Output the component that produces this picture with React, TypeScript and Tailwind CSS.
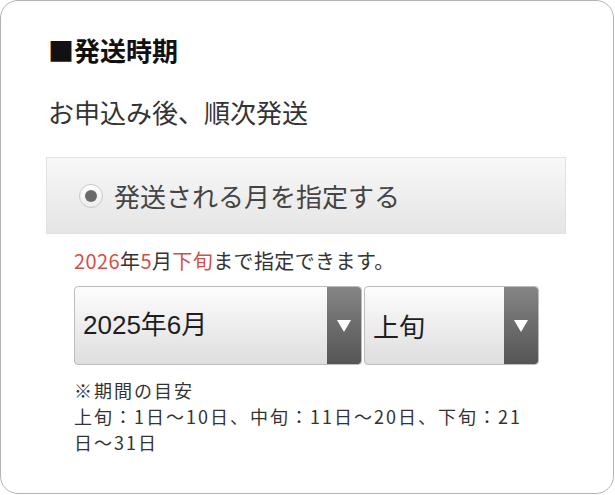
const jp = "font-['Noto_Sans_CJK_JP',sans-serif]";

function Arrow() {
  return (
    <div className="flex w-[34px] shrink-0 items-center justify-center rounded-r-[3px] bg-gradient-to-b from-[#858585] to-[#555555]">
      <svg width="14" height="12" viewBox="0 0 14 12">
        <path d="M0 0 H14 L7 12 Z" fill="#ffffff" />
      </svg>
    </div>
  );
}

function Select({ value, width, font }: { value: string; width: string; font: string }) {
  return (
    <div className={`flex h-[79px] ${width} overflow-hidden rounded-[4px] border border-[#bcbcbc] bg-gradient-to-b from-[#fdfdfd] to-[#dedede]`}>
      <div className={`flex flex-1 items-center pl-[8px] text-[26px] text-[#1e1e1e] ${font}`}>{value}</div>
      <Arrow />
    </div>
  );
}

export default function App() {
  return (
    <div className={`h-[495px] w-[615px] overflow-hidden bg-white ${jp}`}>
      <div className="h-[494px] w-[614px] rounded-[18px] border border-[#b3b3b3] pl-[47px] pr-[40px] pt-[32px]">
        <h2 className="text-[26px] font-bold leading-[34px] text-[#111]">■発送時期</h2>
        <p className="mt-[29px] text-[26px] leading-[32px] text-[#333]">お申込み後、順次発送</p>

        <div className="-ml-[2px] mt-[29px] flex h-[77px] w-[520px] items-center border border-[#e2e2e2] bg-gradient-to-b from-[#f8f8f8] to-[#e5e5e5] pl-[32px]">
          <div className="flex h-[24px] w-[24px] items-center justify-center rounded-full border border-[#c8c8c8] bg-gradient-to-b from-[#ffffff] to-[#ececec]">
            <div className="h-[12px] w-[12px] rounded-full bg-[#6a6a6a]" />
          </div>
          <span className="ml-[11px] text-[26px] leading-[32px] text-[#444]">発送される月を指定する</span>
        </div>

        <div className="pl-[26px]">
          <p className="mt-[14px] text-[20px] leading-[26px] tracking-[0.4px] text-[#333]">
            <span className="text-[#d24f4a]">2026</span>年<span className="text-[#d24f4a]">5</span>月
            <span className="text-[#d24f4a]">下旬</span>まで指定できます。
          </p>

          <div className="mt-[12px] flex gap-[2px]">
            <Select value="2025年6月" width="w-[288px]" font="font-['Liberation_Sans','Noto_Sans_CJK_JP',sans-serif]" />
            <Select value="上旬" width="w-[175px]" font="" />
          </div>

          <div className="mt-[12px] w-[458px] text-[18px] leading-[26px] tracking-[2px] text-[#333]">
            <p>※期間の目安</p>
            <p>上旬：1日〜10日、中旬：11日〜20日、下旬：21日〜31日</p>
          </div>
        </div>
      </div>
    </div>
  );
}
